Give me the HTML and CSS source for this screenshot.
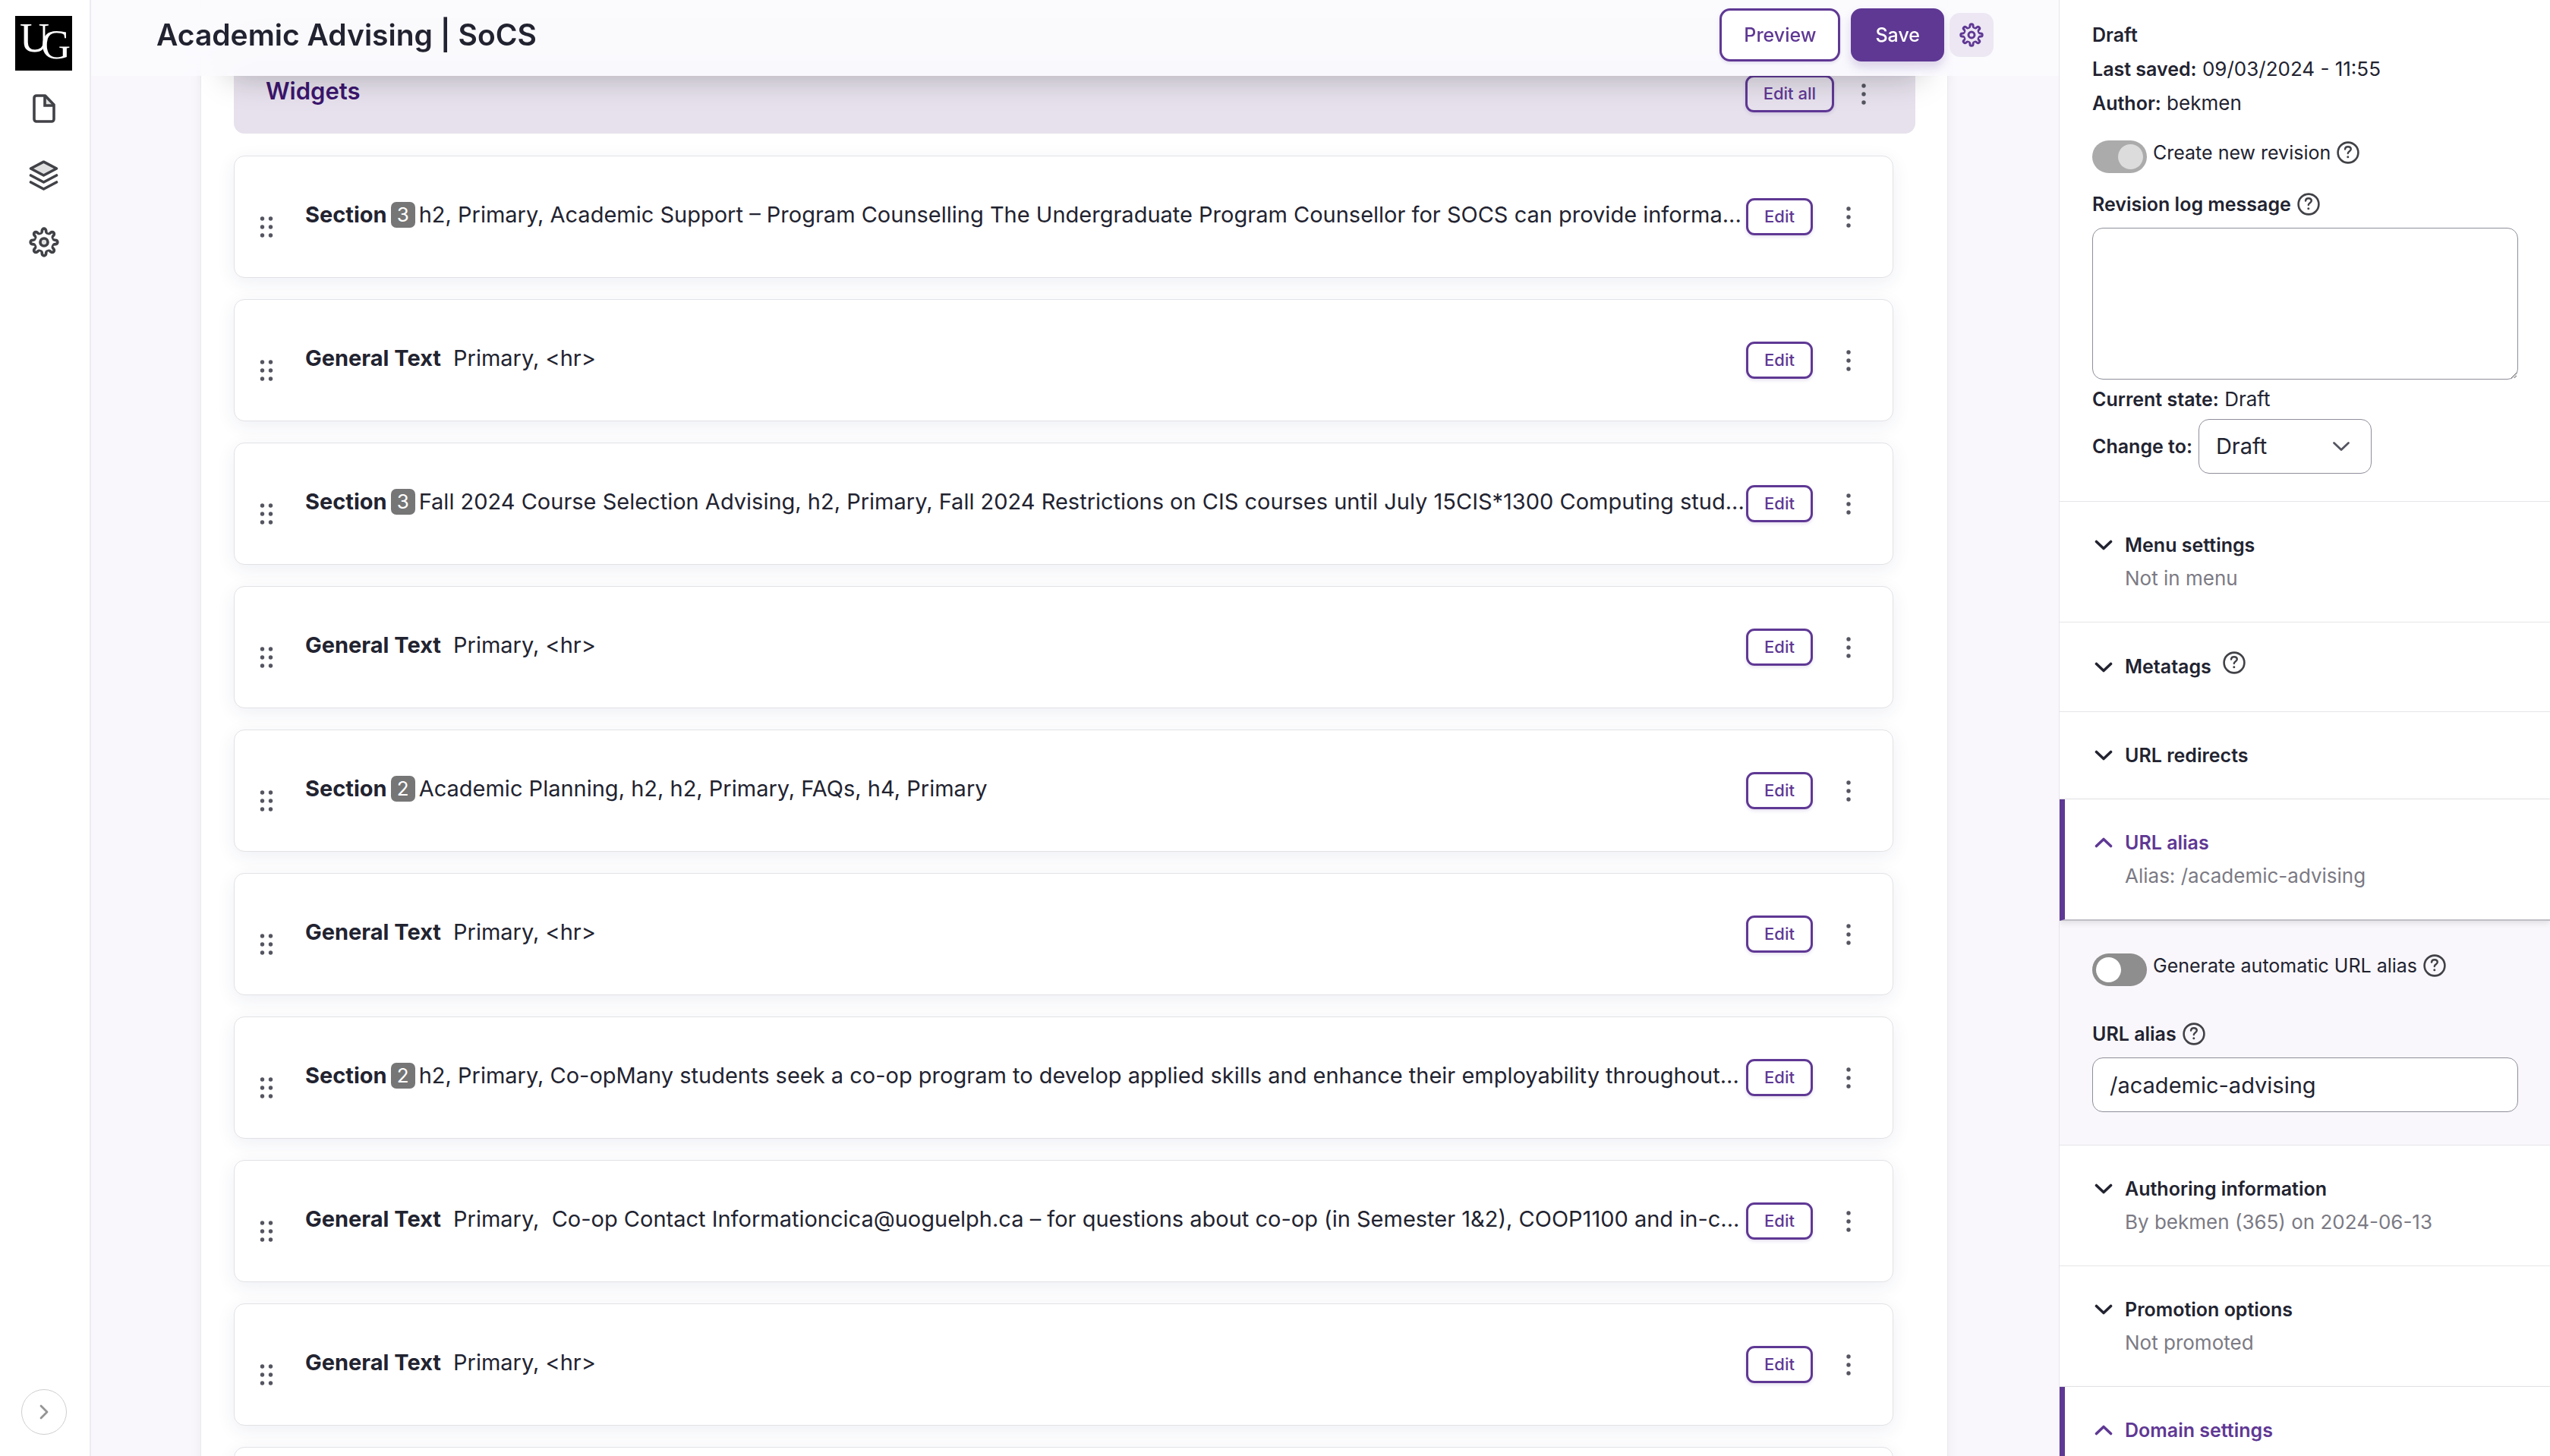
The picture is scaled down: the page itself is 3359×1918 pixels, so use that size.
FILE: index.html
```
<!DOCTYPE html>
<html lang="en">
<head>
<meta charset="utf-8">
<title>Academic Advising | SoCS</title>
<link rel="stylesheet" href="styles.css">
</head>
<body>
<svg class="sprite" aria-hidden="true">
  <symbol id="gear" viewBox="-20 -20 40 40">
    <g fill="none" stroke="currentColor" stroke-width="3.7" stroke-linejoin="round">
      <g id="teeth">
        <path id="tooth" d="M-5.1 -12.3C-3.6 -11.7 -2.7 -13 -2.6 -15.2A2.6 2.6 0 0 1 2.6 -15.2C2.7 -13 3.6 -11.7 5.1 -12.3"/>
        <use href="#tooth" transform="rotate(45)"/>
        <use href="#tooth" transform="rotate(90)"/>
        <use href="#tooth" transform="rotate(135)"/>
        <use href="#tooth" transform="rotate(180)"/>
        <use href="#tooth" transform="rotate(225)"/>
        <use href="#tooth" transform="rotate(270)"/>
        <use href="#tooth" transform="rotate(315)"/>
      </g>
      <circle r="5"/>
    </g>
  </symbol>
  <symbol id="help" viewBox="0 0 30 30">
    <circle cx="15" cy="15" r="13.4" fill="none" stroke="currentColor" stroke-width="2.6"/>
    <path d="M11 10.6C11.2 8.4 12.7 7.2 14.9 7.2c2.3 0 3.9 1.3 3.9 3.3 0 2.6-4 2.8-4 5.6" fill="none" stroke="currentColor" stroke-width="2.4" stroke-linecap="round"/>
    <circle cx="14.8" cy="20.8" r="1.5" fill="currentColor"/>
  </symbol>
  <symbol id="down" viewBox="0 0 24 14">
    <path d="M2.5 2.5L12 11.5L21.5 2.5" fill="none" stroke="currentColor" stroke-linecap="round" stroke-linejoin="round"/>
  </symbol>
  <symbol id="up" viewBox="0 0 24 14">
    <path d="M2.5 11.5L12 2.5L21.5 11.5" fill="none" stroke="currentColor" stroke-linecap="round" stroke-linejoin="round"/>
  </symbol>
  <symbol id="dots" viewBox="0 0 6 28">
    <circle cx="3" cy="3" r="2.7"/><circle cx="3" cy="14" r="2.7"/><circle cx="3" cy="25" r="2.7"/>
  </symbol>
  <symbol id="grip" viewBox="0 0 18 28">
    <circle cx="3.5" cy="3" r="2.7"/><circle cx="3.5" cy="14" r="2.7"/><circle cx="3.5" cy="25" r="2.7"/>
    <circle cx="14.5" cy="3" r="2.7"/><circle cx="14.5" cy="14" r="2.7"/><circle cx="14.5" cy="25" r="2.7"/>
  </symbol>
</svg>

<div class="app">
  <aside class="rail">
    <a class="logo" href="#" aria-label="Home">
      <svg viewBox="0 0 75 72" width="75" height="72">
        <rect width="75" height="72" fill="#000"/>
        <text x="6 34" y="47 56" font-size="54">UG</text>
      </svg>
    </a>
    <nav class="rail-nav" aria-label="Administration">
      <a href="#" aria-label="Content">
        <svg width="30" height="38" viewBox="0 0 30 38">
          <path d="M16 2v13h12" fill="#e0e0e0" stroke="currentColor" stroke-width="3.6"/>
          <path d="M5 2H16.5L28 14V33a3 3 0 0 1-3 3H5a3 3 0 0 1-3-3V5a3 3 0 0 1 3-3z" fill="none" stroke="currentColor" stroke-width="3.6" stroke-linejoin="round"/>
        </svg>
      </a>
      <a href="#" aria-label="Structure">
        <svg width="39" height="40" viewBox="0 0 39 40" stroke="currentColor" stroke-width="3.6" stroke-linecap="round" stroke-linejoin="round">
          <path d="M19.5 2.2L36.5 11L19.5 20L2.5 11z" fill="#e0e0e0"/>
          <path d="M2.5 20L19.5 29L36.5 20M2.5 29L19.5 38L36.5 29" fill="none"/>
        </svg>
      </a>
      <a href="#" aria-label="Configuration">
        <svg width="40" height="40" viewBox="0 0 40 40"><circle cx="20" cy="20" r="5" fill="#e0e0e0"/><use href="#gear" width="40" height="40"/></svg>
      </a>
    </nav>
    <button class="expand" type="button" aria-label="Expand sidebar">
      <svg width="12" height="20" viewBox="0 0 12 20"><path d="M2 2L10 10L2 18" fill="none" stroke="currentColor" stroke-width="2.8" stroke-linecap="round" stroke-linejoin="round"/></svg>
    </button>
  </aside>

  <main class="main">
    <header class="topbar">
      <h1>Academic Advising | SoCS</h1>
      <div class="actions">
        <button class="btn" type="button">Preview</button>
        <button class="btn primary" type="button">Save</button>
        <button class="gear-btn" type="button" aria-label="Settings"><svg width="32" height="32"><use href="#gear"/></svg></button>
      </div>
    </header>

    <section class="panel">
      <div class="group-bar">
        <h2>Widgets</h2>
        <button class="btn small" type="button">Edit all</button>
        <button class="more" type="button" aria-label="More"><svg width="6" height="28"><use href="#dots"/></svg></button>
      </div>

      <div class="cards">
        <article class="card">
          <svg class="grip" width="18" height="28"><use href="#grip"/></svg>
          <p><strong>Section</strong><span class="count">3</span><span class="desc">h2, Primary, Academic Support – Program Counselling The Undergraduate Program Counsellor for SOCS can provide informa...</span></p>
          <button class="btn small" type="button">Edit</button>
          <button class="more" type="button" aria-label="More"><svg width="6" height="28"><use href="#dots"/></svg></button>
        </article>
        <article class="card">
          <svg class="grip" width="18" height="28"><use href="#grip"/></svg>
          <p><strong>General Text</strong><span class="desc">Primary, &lt;hr&gt;</span></p>
          <button class="btn small" type="button">Edit</button>
          <button class="more" type="button" aria-label="More"><svg width="6" height="28"><use href="#dots"/></svg></button>
        </article>
        <article class="card">
          <svg class="grip" width="18" height="28"><use href="#grip"/></svg>
          <p><strong>Section</strong><span class="count">3</span><span class="desc">Fall 2024 Course Selection Advising, h2, Primary, Fall 2024 Restrictions on CIS courses until July 15CIS*1300 Computing stud...</span></p>
          <button class="btn small" type="button">Edit</button>
          <button class="more" type="button" aria-label="More"><svg width="6" height="28"><use href="#dots"/></svg></button>
        </article>
        <article class="card">
          <svg class="grip" width="18" height="28"><use href="#grip"/></svg>
          <p><strong>General Text</strong><span class="desc">Primary, &lt;hr&gt;</span></p>
          <button class="btn small" type="button">Edit</button>
          <button class="more" type="button" aria-label="More"><svg width="6" height="28"><use href="#dots"/></svg></button>
        </article>
        <article class="card">
          <svg class="grip" width="18" height="28"><use href="#grip"/></svg>
          <p><strong>Section</strong><span class="count">2</span><span class="desc">Academic Planning, h2, h2, Primary, FAQs, h4, Primary</span></p>
          <button class="btn small" type="button">Edit</button>
          <button class="more" type="button" aria-label="More"><svg width="6" height="28"><use href="#dots"/></svg></button>
        </article>
        <article class="card">
          <svg class="grip" width="18" height="28"><use href="#grip"/></svg>
          <p><strong>General Text</strong><span class="desc">Primary, &lt;hr&gt;</span></p>
          <button class="btn small" type="button">Edit</button>
          <button class="more" type="button" aria-label="More"><svg width="6" height="28"><use href="#dots"/></svg></button>
        </article>
        <article class="card">
          <svg class="grip" width="18" height="28"><use href="#grip"/></svg>
          <p><strong>Section</strong><span class="count">2</span><span class="desc">h2, Primary, Co-opMany students seek a co-op program to develop applied skills and enhance their employability throughout...</span></p>
          <button class="btn small" type="button">Edit</button>
          <button class="more" type="button" aria-label="More"><svg width="6" height="28"><use href="#dots"/></svg></button>
        </article>
        <article class="card">
          <svg class="grip" width="18" height="28"><use href="#grip"/></svg>
          <p><strong>General Text</strong><span class="desc">Primary, &nbsp;Co-op Contact Informationcica@uoguelph.ca – for questions about co-op (in Semester 1&amp;2), COOP1100 and in-c...</span></p>
          <button class="btn small" type="button">Edit</button>
          <button class="more" type="button" aria-label="More"><svg width="6" height="28"><use href="#dots"/></svg></button>
        </article>
        <article class="card">
          <svg class="grip" width="18" height="28"><use href="#grip"/></svg>
          <p><strong>General Text</strong><span class="desc">Primary, &lt;hr&gt;</span></p>
          <button class="btn small" type="button">Edit</button>
          <button class="more" type="button" aria-label="More"><svg width="6" height="28"><use href="#dots"/></svg></button>
        </article>
        <article class="card"></article>
      </div>
    </section>
  </main>

  <aside class="side">
    <section class="status">
      <div class="line"><b>Draft</b></div>
      <div class="line"><b>Last saved:</b> 09/03/2024 - 11:55</div>
      <div class="line"><b>Author:</b> bekmen</div>
      <div class="toggle-row">
        <input class="toggle" type="checkbox" id="rev" checked disabled>
        <label for="rev">Create new revision</label>
        <svg class="help" width="30" height="30"><use href="#help"/></svg>
      </div>
      <div class="field-label">
        <label for="log">Revision log message</label>
        <svg class="help" width="30" height="30"><use href="#help"/></svg>
      </div>
      <textarea id="log"></textarea>
      <div class="line state"><b>Current state:</b> Draft</div>
      <div class="change">
        <label for="state">Change to:</label>
        <div class="select">
          <select id="state"><option>Draft</option></select>
          <svg width="24" height="14"><use href="#down"/></svg>
        </div>
      </div>
    </section>

    <details>
      <summary><svg width="24" height="14"><use href="#down"/></svg><span class="name">Menu settings</span><span class="info">Not in menu</span></summary>
    </details>
    <details>
      <summary><svg width="24" height="14"><use href="#down"/></svg><span class="name with-help">Metatags <svg class="help" width="30" height="30"><use href="#help"/></svg></span></summary>
    </details>
    <details>
      <summary><svg width="24" height="14"><use href="#down"/></svg><span class="name">URL redirects</span></summary>
    </details>
    <details open>
      <summary><svg width="24" height="14"><use href="#up"/></svg><span class="name">URL alias</span><span class="info">Alias: /academic-advising</span></summary>
      <div class="body">
        <div class="toggle-row">
          <input class="toggle" type="checkbox" id="auto">
          <label for="auto">Generate automatic URL alias</label>
          <svg class="help" width="30" height="30"><use href="#help"/></svg>
        </div>
        <div class="field-label">
          <label for="alias">URL alias</label>
          <svg class="help" width="30" height="30"><use href="#help"/></svg>
        </div>
        <input class="text" id="alias" type="text" value="/academic-advising">
      </div>
    </details>
    <details>
      <summary><svg width="24" height="14"><use href="#down"/></svg><span class="name">Authoring information</span><span class="info">By bekmen (365) on 2024-06-13</span></summary>
    </details>
    <details>
      <summary><svg width="24" height="14"><use href="#down"/></svg><span class="name">Promotion options</span><span class="info">Not promoted</span></summary>
    </details>
    <details open>
      <summary><svg width="24" height="14"><use href="#up"/></svg><span class="name">Domain settings</span></summary>
    </details>
  </aside>
</div>
</body>
</html>
```
FILE: styles.css
```
:root {
  --ink: #222330;
  --muted: #7b7a84;
  --icon: #414247;
  --accent: #5f3894;
  --line: #e6e5e9;
  --app: #f9f7fb;
  --field: #8e8f9b;
}

* { box-sizing: border-box; }

body {
  margin: 0;
  background: var(--app);
  color: var(--ink);
  font: 400 26px/32px Inter, "Liberation Sans", sans-serif;
}

h1, h2, p { margin: 0; }
button, input, select, textarea { font: inherit; color: inherit; }
button { cursor: pointer; }
svg { display: block; flex: none; }
.sprite { position: absolute; width: 0; height: 0; }

.app {
  display: grid;
  grid-template-columns: 120px minmax(0, 1fr) 647px;
  height: 100vh;
}

/* Left rail */
.rail {
  display: flex;
  flex-direction: column;
  align-items: center;
  padding: 21px 3px 28px 0;
  background: #fff;
  border-right: 2px solid #ececf0;
}
.logo svg { overflow: visible; }
.logo text { font-family: "Liberation Serif", serif; fill: #fff; }
.rail-nav { display: flex; flex-direction: column; margin-top: 6px; }
.rail-nav a {
  display: grid;
  place-items: center;
  height: 88px;
  width: 88px;
  color: var(--icon);
}
.expand {
  display: grid;
  place-items: center;
  width: 60px;
  height: 60px;
  margin-top: auto;
  padding: 0;
  border: 1px solid #cfcfcf;
  border-radius: 50%;
  background: #fff;
  color: #949494;
}

/* Main column */
.main {
  overflow-y: auto;
  scrollbar-width: none;
}
.topbar {
  position: sticky;
  top: 0;
  z-index: 2;
  display: flex;
  align-items: center;
  justify-content: space-between;
  height: 100px;
  padding: 0 86px 8px;
}
.topbar::before {
  content: "";
  position: absolute;
  inset: 0;
  z-index: -1;
  background: rgba(251, 251, 254, .9);
  backdrop-filter: blur(16px);
}
.topbar::after {
  content: "";
  position: absolute;
  inset: 50px 180px 0;
  z-index: -2;
  box-shadow: 0 0 44px rgba(0, 0, 0, .26);
}
h1 { font-size: 39px; line-height: 48px; font-weight: 600; }
.actions { display: flex; align-items: center; }

.btn {
  flex: none;
  height: 70px;
  padding: 0 29px;
  border: 3px solid var(--accent);
  border-radius: 14px;
  background: #fff;
  color: var(--accent);
  font-size: 25px;
  font-weight: 500;
  line-height: 32px;
  box-shadow: 0 2px 4px rgba(95, 56, 148, .16);
}
.btn.primary {
  margin: 0 7px 0 14px;
  background: var(--accent);
  color: #fff;
  box-shadow: 0 8px 14px rgba(95, 56, 148, .2);
}
.btn.small {
  height: 49px;
  padding: 0 21px;
  border-radius: 11px;
  font-size: 22px;
  line-height: 27px;
}
.gear-btn {
  display: grid;
  place-items: center;
  width: 58px;
  height: 58px;
  padding: 0;
  border: 0;
  border-radius: 14px;
  background: #ece7f2;
  color: var(--accent);
}

.panel {
  margin: -100px 146px 0 144px;
  padding: 71px 42px 28px 43px;
  background: #fff;
  border: 1px solid #eae9ed;
  border-width: 0 1px;
  box-shadow: 0 0 16px rgba(40, 30, 70, .05);
}
.group-bar {
  display: flex;
  align-items: center;
  height: 105px;
  padding: 0 48px 0 42px;
  border-radius: 14px;
  background: #e6e1ec;
}
.group-bar h2 {
  flex: 1;
  padding-bottom: 8px;
  color: #3b166e;
  font-size: 31px;
  line-height: 36px;
  font-weight: 600;
}
.group-bar .btn { background: transparent; }
.group-bar .more { margin-left: 19px; }

.more {
  display: grid;
  place-items: center;
  flex: none;
  width: 40px;
  height: 48px;
  margin-left: 27px;
  padding: 0;
  border: 0;
  background: none;
  fill: #545560;
}

.cards {
  display: grid;
  gap: 28px;
  margin: 29px 29px 0 0;
}
.card {
  display: flex;
  align-items: center;
  height: 161px;
  padding: 0 38px 0 33px;
  border: 1px solid #e2e2e6;
  border-radius: 14px;
  background: #fff;
  box-shadow: 0 6px 24px rgba(40, 50, 110, .08);
}
.grip { margin-top: 26px; fill: #545560; }
.card p {
  display: flex;
  align-items: center;
  gap: 5px;
  flex: 1;
  min-width: 0;
  padding: 0 0 6px 42px;
  font-size: 29px;
  line-height: 34px;
  white-space: nowrap;
}
.card strong { font-weight: 650; }
.card strong + .desc { margin-left: 11px; }
.count {
  width: 32px;
  border-radius: 7px;
  background: #767676;
  color: #fff;
  text-align: center;
  font-size: 26px;
}

/* Right sidebar */
.side {
  overflow-y: auto;
  scrollbar-width: none;
  background: #fff;
  border-left: 1px solid var(--line);
}
.status { padding: 23px 42px 36px 43px; }
.line { line-height: 45px; }
.side b, .field-label label, .change label, .name { font-size: 25px; font-weight: 600; }
.line b { line-height: 25px; }

.toggle-row { display: flex; align-items: flex-start; gap: 8px; font-size: 25px; }
.status .toggle-row { margin-top: 27px; }
.toggle {
  appearance: none;
  display: flex;
  width: 72px;
  height: 43px;
  margin: 0;
  padding: 5px;
  border-radius: 22px;
  background: #8e8e8e;
}
.toggle::before {
  content: "";
  width: 33px;
  height: 33px;
  border-radius: 50%;
  background: #fff;
}
.toggle:checked { justify-content: flex-end; }
.toggle:disabled { background: #ababab; }
.toggle:disabled::before { background: #dcdcdc; }
.help { margin-top: 1px; color: var(--icon); }

.field-label { display: flex; gap: 8px; margin: 25px 0 15px; }
.body .field-label { margin-top: 47px; }

textarea, .text, select {
  display: block;
  width: 100%;
  height: 72px;
  padding: 0 22px;
  border: 1px solid var(--field);
  border-radius: 14px;
  background: #fff;
  font-size: 29px;
}
textarea { height: 200px; }
.state { margin: 3px 0 4px; }
.change { display: flex; align-items: center; gap: 8px; }
.select { display: grid; align-items: center; width: 228px; }
.select > * { grid-area: 1 / 1; }
.select select { appearance: none; }
.select svg {
  justify-self: end;
  margin-right: 28px;
  color: #545560;
  stroke-width: 2.8px;
  pointer-events: none;
}

details { border-top: 1px solid var(--line); }
summary {
  display: grid;
  grid-template-columns: 24px 1fr;
  column-gap: 16px;
  align-items: center;
  padding: 35px 42px 35px 46px;
  line-height: 44px;
  list-style: none;
  cursor: pointer;
}
summary > svg { stroke-width: 3.6px; }
.info { grid-column: 2; color: var(--muted); }
.with-help { display: flex; gap: 15px; height: 47px; line-height: 47px; }
.with-help .help { margin-top: 3px; }
details[open] > summary {
  position: relative;
  padding-left: 39px;
  border-left: 7px solid var(--accent);
  border-bottom: 2px solid #c0bfc6;
  color: var(--accent);
  box-shadow: 0 3px 8px rgba(0, 0, 0, .1);
}
details[open] .info { color: var(--muted); }
.body { padding: 43px 42px 43px 43px; background: var(--app); }
```
